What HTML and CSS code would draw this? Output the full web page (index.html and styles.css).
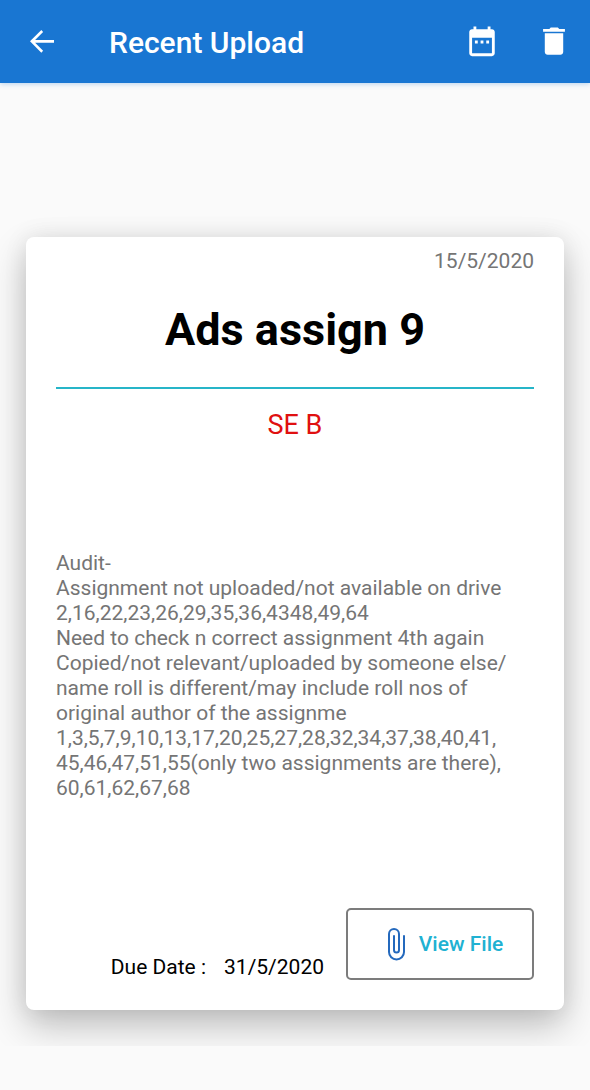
FILE: index.html
```html
<!DOCTYPE html>
<html lang="en">
<head>
<meta charset="utf-8">
<meta name="viewport" content="width=device-width, initial-scale=1">
<title>Recent Upload</title>
<link rel="stylesheet" href="styles.css">
</head>
<body>
<header class="bar">
  <button class="icon-button" aria-label="Back">
    <svg class="icon" viewBox="0 0 24 24"><path d="M21 10.500H6.830l6-6L11.500 3 3 11.500l8.500 8.500 1.330-1.500-6-6H21v-2z"/></svg>
  </button>
  <h1 class="bar-title">Recent Upload</h1>
  <div class="actions">
    <button class="icon-button" aria-label="Due date">
      <svg class="icon icon-large" viewBox="0 0 24 24"><path d="M9 11H7v2h2v-2zm4 0h-2v2h2v-2zm4 0h-2v2h2v-2zm2-8h-1V1h-2v2H8V1H6v2H5c-1.110 0-2 .9-2 2v15c0 1.100.9 2 2 2h14c1.100 0 2-.9 2-2V5c0-1.100-.9-2-2-2zm0 17H5V9h14v11z"/></svg>
    </button>
    <button class="icon-button" aria-label="Delete">
      <svg class="icon icon-large" viewBox="0 0 24 24"><path d="M5.500 19c0 1.100.9 2 2 2h9c1.100 0 2-.9 2-2V5.800h-13V19zM19.700 2.800h-4l-1-1h-5l-1 1h-4.400v2h15.400v-2z"/></svg>
    </button>
  </div>
</header>
<main class="page">
  <article class="card">
    <time class="posted">15/5/2020</time>
    <h2 class="title">Ads assign 9</h2>
    <p class="group">SE B</p>
    <p class="notes">Audit-<br>Assignment not uploaded/not available on drive<br>2,16,22,23,26,29,35,36,4348,49,64<br>Need to check n correct assignment 4th again<br>Copied/not relevant/uploaded by someone else/<br>name roll is different/may include roll nos of<br>original author of the assignme<br>1,3,5,7,9,10,13,17,20,25,27,28,32,34,37,38,40,41,<br>45,46,47,51,55(only two assignments are there),<br>60,61,62,67,68</p>
    <footer class="foot">
      <p class="due"><span>Due Date :</span><time>31/5/2020</time></p>
      <button class="view">
        <svg class="clip" viewBox="0 0 20 34"><path d="M17 9v16a7.500 7.500 0 0 1-15 0V7a5 5 0 0 1 10 0v16a2.500 2.500 0 0 1-5 0V9"/></svg>
        View File
      </button>
    </footer>
  </article>
</main>
</body>
</html>
```

FILE: styles.css
```css
* { box-sizing: border-box; }
body { margin: 0; background: #fafafa; font-family: Roboto, sans-serif; color: #000; }
h1, h2, p { margin: 0; }
button { border: 0; padding: 0; background: none; font: inherit; cursor: pointer; }
.bar { display: flex; align-items: center; height: 83px; padding: 0 19px 0 26px; background: #1976d2; color: #fff; box-shadow: 0 1px 5px rgba(25, 118, 210, .3); }
.icon-button { display: flex; color: inherit; }
.icon { width: 32px; height: 32px; fill: currentColor; }
.icon-large { width: 34px; height: 34px; }
.bar-title { margin-left: 51px; padding-top: 2px; font-size: 30px; line-height: 40px; font-weight: 500; }
.actions { display: flex; gap: 38px; margin-left: auto; }
.page { padding: 154px 26px 36px; overflow: hidden; }
.card { display: flex; flex-direction: column; padding: 8px 30px 30px; border-radius: 8px; background: #fff; box-shadow: 0 16px 36px rgba(0, 0, 0, .24), 0 0 24px rgba(0, 0, 0, .08); }
.posted { align-self: flex-end; font-size: 21px; line-height: 32px; color: #757575; }
.title { padding: 24px 0 28px; border-bottom: 2px solid #26b5c8; font-size: 45px; line-height: 58px; font-weight: 700; text-align: center; }
.group { margin-top: 18px; font-size: 27px; line-height: 36px; color: #e01010; text-align: center; }
.notes { margin-top: 108px; font-size: 21px; line-height: 25px; color: #757575; }
.foot { display: flex; justify-content: flex-end; align-items: flex-end; gap: 22px; margin-top: 107px; }
.due { display: flex; gap: 18px; font-size: 21px; line-height: 26px; }
.view { display: flex; align-items: center; justify-content: center; gap: 12px; width: 188px; height: 72px; padding-left: 10px; border: 2px solid #7c7c7c; border-radius: 5px; color: #20b1d2; font-size: 21px; font-weight: 500; }
.clip { width: 20px; height: 34px; fill: none; stroke: #2469bd; stroke-width: 2; stroke-linecap: round; }
```
